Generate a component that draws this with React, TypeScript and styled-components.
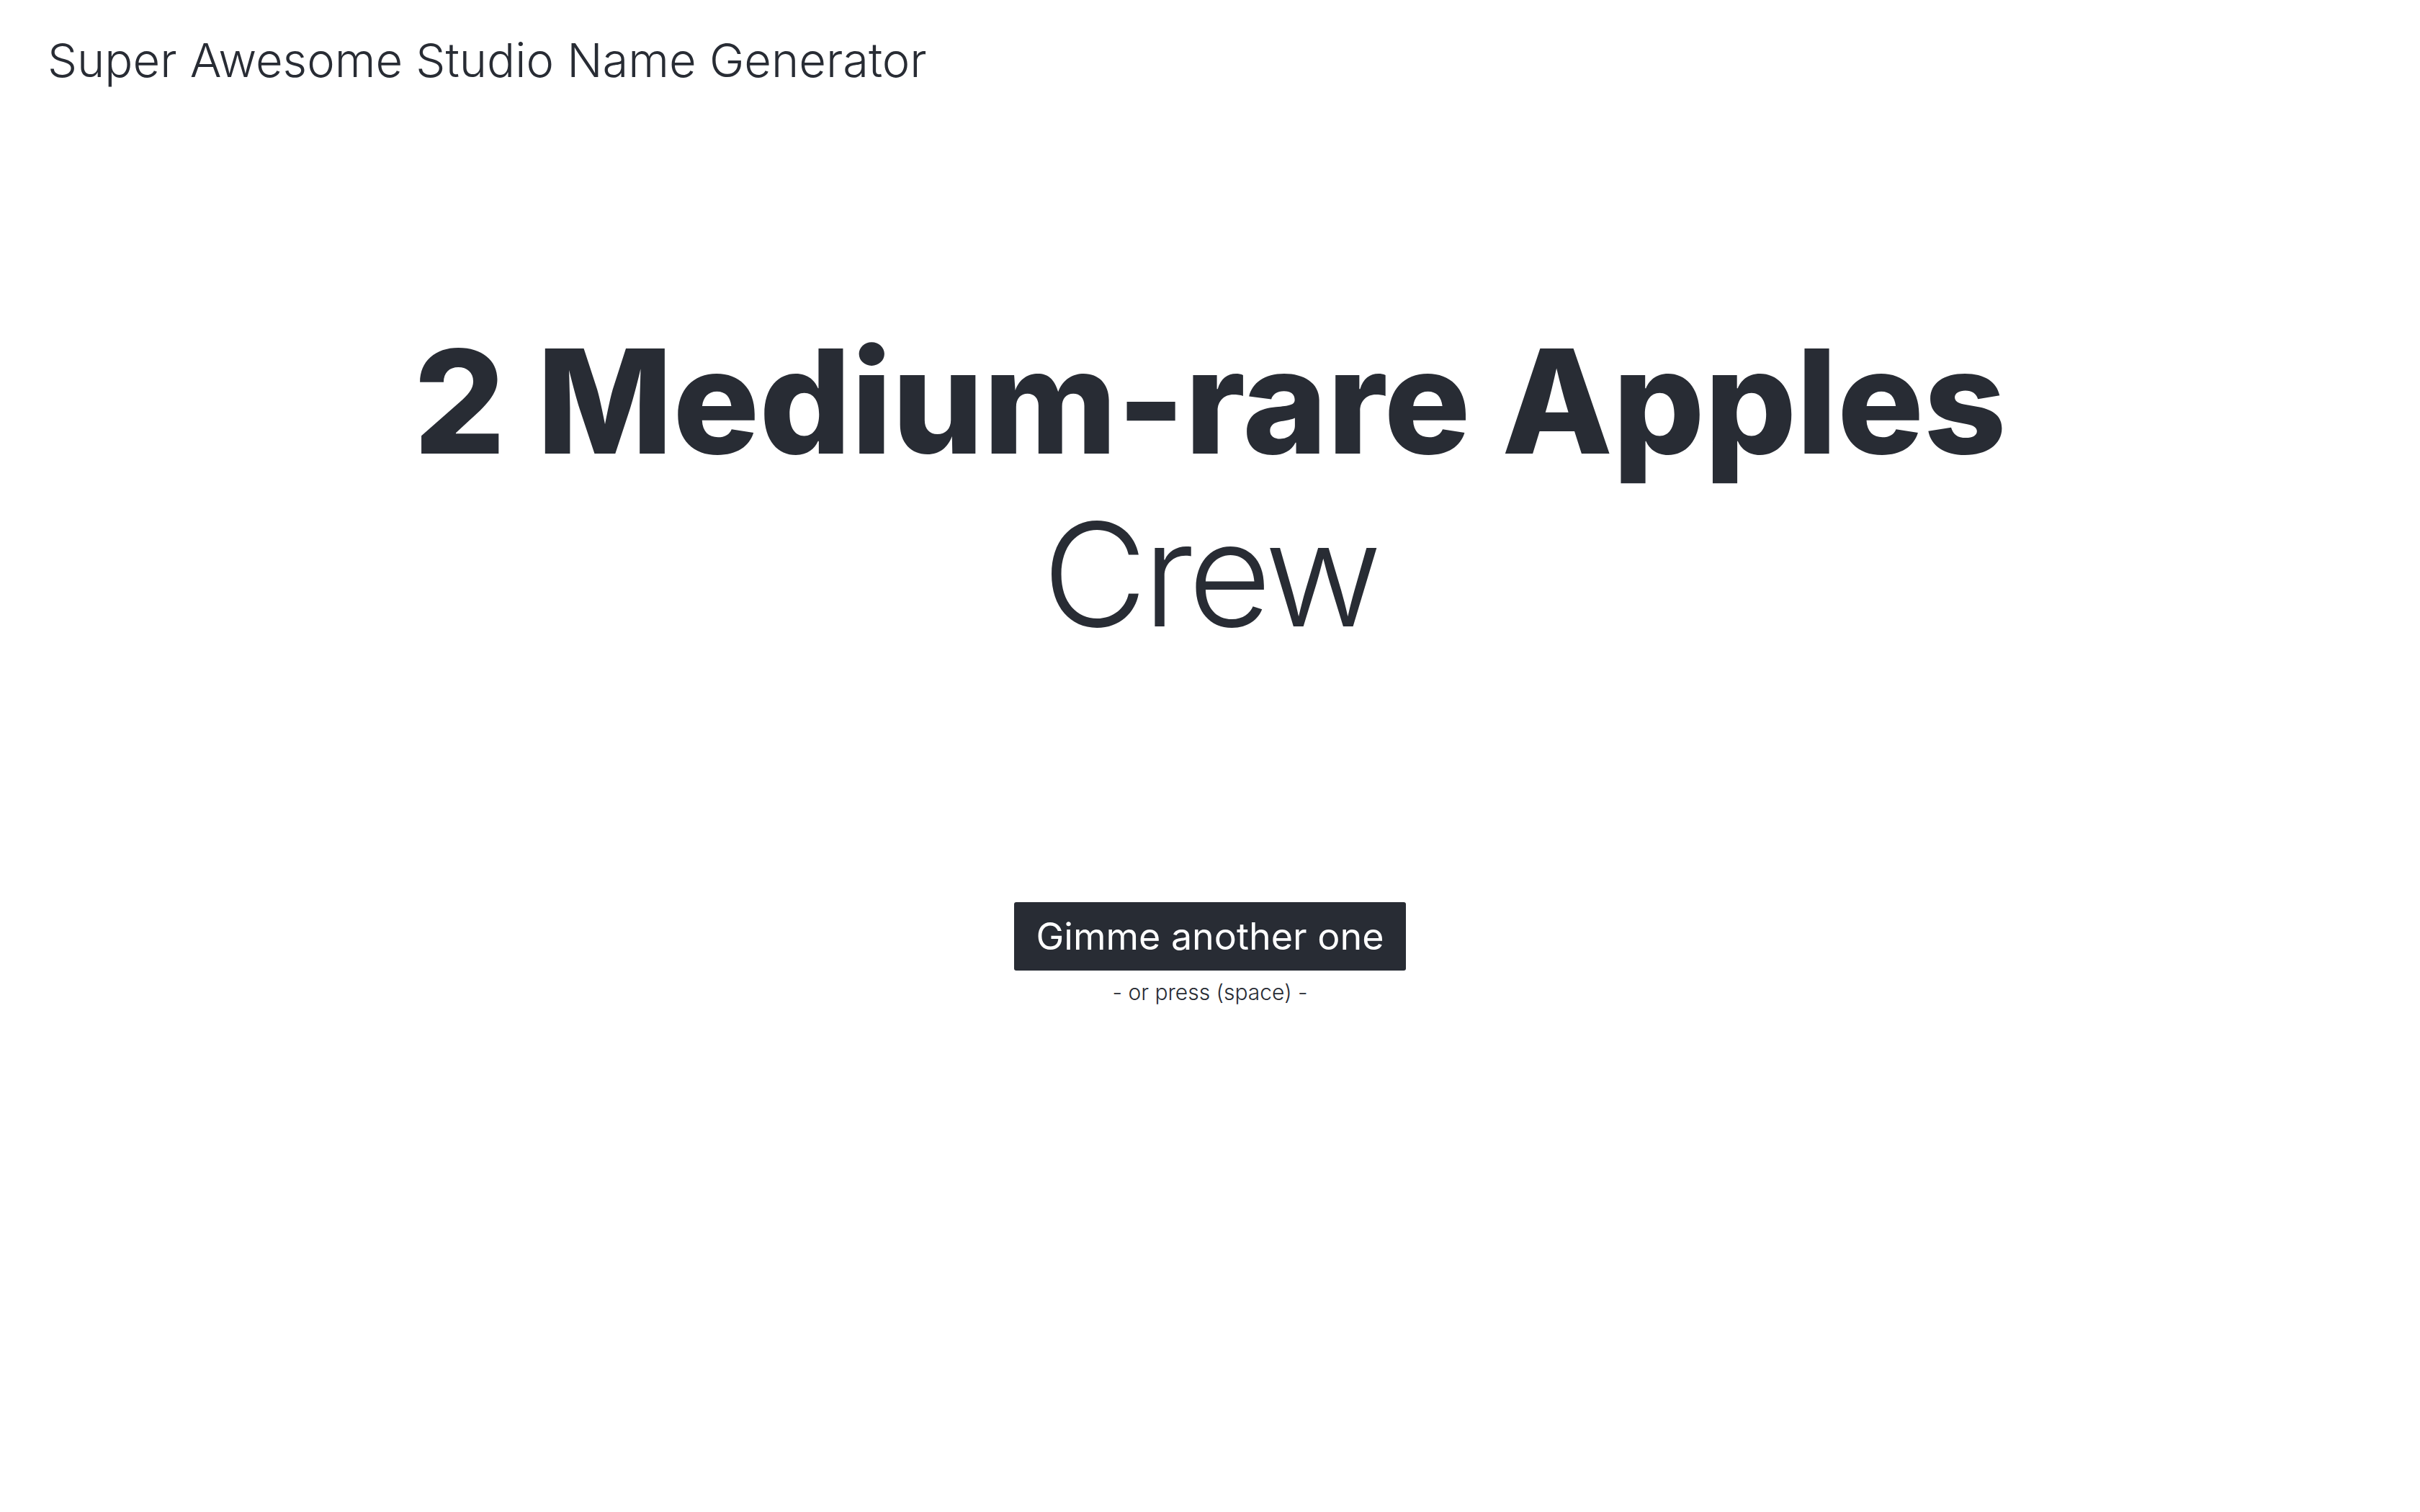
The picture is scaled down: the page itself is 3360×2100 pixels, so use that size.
import React from "react";
import styled, { createGlobalStyle } from "styled-components";

const GlobalStyle = createGlobalStyle`
  html, body {
    margin: 0;
    padding: 0;
    background: #ffffff;
    color: #282c34;
    font-family: Inter, "Noto Sans", sans-serif;
  }
`;

const Page = styled.div`
  min-height: 2100px;
  display: flex;
  flex-direction: column;
`;

const Header = styled.header`
  padding: 44px 0 0 66px;
`;

const SiteTitle = styled.h1`
  margin: 0;
  font-size: 65px;
  font-weight: 300;
  line-height: 80px;
  color: #282c34;
`;

const Main = styled.main`
  display: flex;
  flex-direction: column;
  align-items: center;
  padding-top: 313px;
`;

const NameBlock = styled.div`
  display: flex;
  flex-direction: column;
  align-items: center;
  text-align: center;
`;

const NameLine = styled.div<{ $bold?: boolean }>`
  font-size: 200px;
  line-height: 240px;
  font-weight: ${(p) => (p.$bold ? 800 : 300)};
  letter-spacing: ${(p) => (p.$bold ? "0" : "-6px")};
  color: #282c34;
`;

const Actions = styled.div`
  display: flex;
  flex-direction: column;
  align-items: center;
  margin-top: 336px;
`;

const GimmeButton = styled.button`
  background: #282c34;
  color: #ffffff;
  border: none;
  border-radius: 3px;
  height: 95px;
  width: 544px;
  padding: 0;
  font-family: Inter, "Noto Sans", sans-serif;
  font-size: 52px;
  font-weight: 400;
  cursor: pointer;
`;

const Hint = styled.div`
  margin-top: 12px;
  font-size: 30px;
  font-weight: 300;
  color: #282c34;
`;

export default function App() {
  return (
    <>
      <GlobalStyle />
      <Page>
        <Header>
          <SiteTitle>Super Awesome Studio Name Generator</SiteTitle>
        </Header>
        <Main>
          <NameBlock>
            <NameLine $bold>2 Medium-rare Apples</NameLine>
            <NameLine>Crew</NameLine>
          </NameBlock>
          <Actions>
            <GimmeButton>Gimme another one</GimmeButton>
            <Hint>- or press (space) -</Hint>
          </Actions>
        </Main>
      </Page>
    </>
  );
}
